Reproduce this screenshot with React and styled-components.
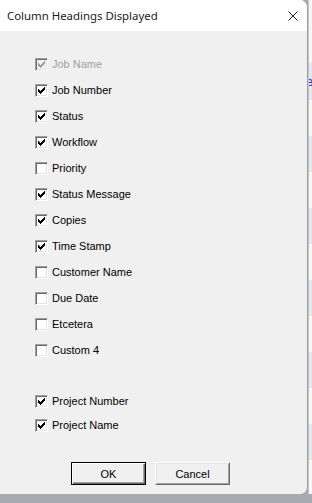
import React from 'react';
import styled, { createGlobalStyle } from 'styled-components';

const GlobalStyle = createGlobalStyle`
	html, body {
		margin: 0;
		padding: 0;
		background: #a9a9b1;
	}
	#root {
		width: 312px;
		height: 503px;
		overflow: hidden;
	}
`

const columns = [
	{ label: 'Job Name', checked: true, disabled: true },
	{ label: 'Job Number', checked: true },
	{ label: 'Status', checked: true },
	{ label: 'Workflow', checked: true },
	{ label: 'Priority', checked: false },
	{ label: 'Status Message', checked: true },
	{ label: 'Copies', checked: true },
	{ label: 'Time Stamp', checked: true },
	{ label: 'Customer Name', checked: false },
	{ label: 'Due Date', checked: false },
	{ label: 'Etcetera', checked: false },
	{ label: 'Custom 4', checked: false }
];

const projectColumns = [
	{ label: 'Project Number', checked: true },
	{ label: 'Project Name', checked: true }
];

/* layout */
const Screen = styled.div`
	display: flex;
	flex-direction: row;
	height: 494px;
	background: #a9a9b1;
`

const Dialog = styled.div`
	width: 307px;
	flex-shrink: 0;
	height: 494px;
	display: flex;
	flex-direction: column;
	background: #f0f0f0;
	border-right: 1px solid #9d9da3;
	border-top-right-radius: 8px;
	border-bottom-right-radius: 7px;
	overflow: hidden;
	font-family: "Liberation Sans", Arial, sans-serif;
`

const BackApp = styled.div`
	flex: 1;
	min-width: 0;
	display: flex;
	flex-direction: column;
	background: #ffffff;
	border-left: 1px solid #c6c6cc;
	overflow: hidden;
`

const BackRow = styled.div`
	height: ${p => p.h}px;
	flex-shrink: 0;
	background: ${p => p.shade ? '#e3e8f0' : '#f7f7f7'};
	color: #1a2ccc;
	font-size: 13px;
	line-height: ${p => p.h}px;
	white-space: nowrap;
	text-indent: -3px;
	font-family: "Liberation Sans", Arial, sans-serif;
`

const BottomStrip = styled.div`
	height: 9px;
	background: #a9a9b1;
`

const TitleBar = styled.div`
	height: 31px;
	flex-shrink: 0;
	display: flex;
	align-items: center;
	justify-content: space-between;
	background: #ffffff;
	padding-left: 7px;
	font-family: "Noto Sans", "Open Sans", sans-serif;
	font-size: 11.4px;
	color: #1a1a1a;
`

const CloseButton = styled.div`
	width: 28px;
	height: 31px;
	display: flex;
	align-items: center;
	justify-content: center;
`

const Body = styled.div`
	flex: 1;
	display: flex;
	flex-direction: column;
	padding: 20px 0 0 35px;
`

const Group = styled.div`
	display: flex;
	flex-direction: column;
	margin-bottom: ${p => p.gap || 0}px;
`

const Row = styled.label`
	height: ${p => p.h}px;
	display: flex;
	align-items: center;
	gap: 4px;
	font-size: 11px;
	color: ${p => p.disabled ? '#a0a0a0' : '#000000'};
`

const Box = styled.span`
	width: 13px;
	height: 13px;
	box-sizing: border-box;
	display: flex;
	align-items: center;
	justify-content: center;
	background: ${p => p.disabled ? '#f0f0f0' : '#ffffff'};
	border-top: 1px solid #a0a0a0;
	border-left: 1px solid #a0a0a0;
	border-right: 1px solid #ffffff;
	border-bottom: 1px solid #ffffff;
	box-shadow: inset 1px 1px 0 #696969, inset -1px -1px 0 #e3e3e3;
`

const Buttons = styled.div`
	display: flex;
	flex-direction: row;
	gap: 9px;
	padding-left: 36px;
`

const Button = styled.button`
	width: 75px;
	height: 23px;
	box-sizing: border-box;
	padding: 0;
	background: #f0f0f0;
	font-family: "Liberation Sans", Arial, sans-serif;
	font-size: 11px;
	color: #000000;
	border: 1px solid ${p => p.primary ? '#000000' : '#ffffff'};
	border-right-color: ${p => p.primary ? '#000000' : '#696969'};
	border-bottom-color: ${p => p.primary ? '#000000' : '#696969'};
	box-shadow: ${p => p.primary
		? 'inset 1px 1px 0 #ffffff, inset -1px -1px 0 #696969, inset -2px -2px 0 #a0a0a0'
		: 'inset 1px 1px 0 #e3e3e3, inset -1px -1px 0 #a0a0a0'};
`

const Check = ({ color }) => (
	<svg width="7" height="7" viewBox="0 0 7 7">
		<path d="M0 2h1v1h1v1h1V3h1V2h1V1h1V0h1v3h-1v1h-1v1h-1v1h-1v1h-1V6h-1V5H0z" fill={color} />
	</svg>
)

const CloseIcon = () => (
	<svg width="10" height="10" viewBox="0 0 10 10">
		<path d="M0.5 0.5L9.5 9.5M9.5 0.5L0.5 9.5" stroke="#1a1a1a" strokeWidth="1" fill="none" />
	</svg>
)

const CheckRow = ({ item, h }) => (
	<Row h={h} disabled={item.disabled}>
		<Box disabled={item.disabled}>
			{item.checked && <Check color={item.disabled ? '#a0a0a0' : '#000000'} />}
		</Box>
		{item.label}
	</Row>
)

export default function App() {
	const back = [63, 37, 36, 36, 36, 36, 36, 36, 36, 36, 36, 36, 36];
	return (
		<>
			<GlobalStyle />
			<Screen>
				<Dialog>
					<TitleBar>
						Column Headings Displayed
						<CloseButton><CloseIcon /></CloseButton>
					</TitleBar>
					<Body>
						<Group gap={26}>
							{columns.map(c => <CheckRow key={c.label} item={c} h={26} />)}
						</Group>
						<Group gap={25}>
							{projectColumns.map(c => <CheckRow key={c.label} item={c} h={24} />)}
						</Group>
						<Buttons>
							<Button primary>OK</Button>
							<Button>Cancel</Button>
						</Buttons>
					</Body>
				</Dialog>
				<BackApp>
					{back.map((h, i) => (
						<BackRow key={i} h={h} shade={i % 2 === 1}>{i === 1 ? 'e' : ''}</BackRow>
					))}
				</BackApp>
			</Screen>
			<BottomStrip />
		</>
	);
}
